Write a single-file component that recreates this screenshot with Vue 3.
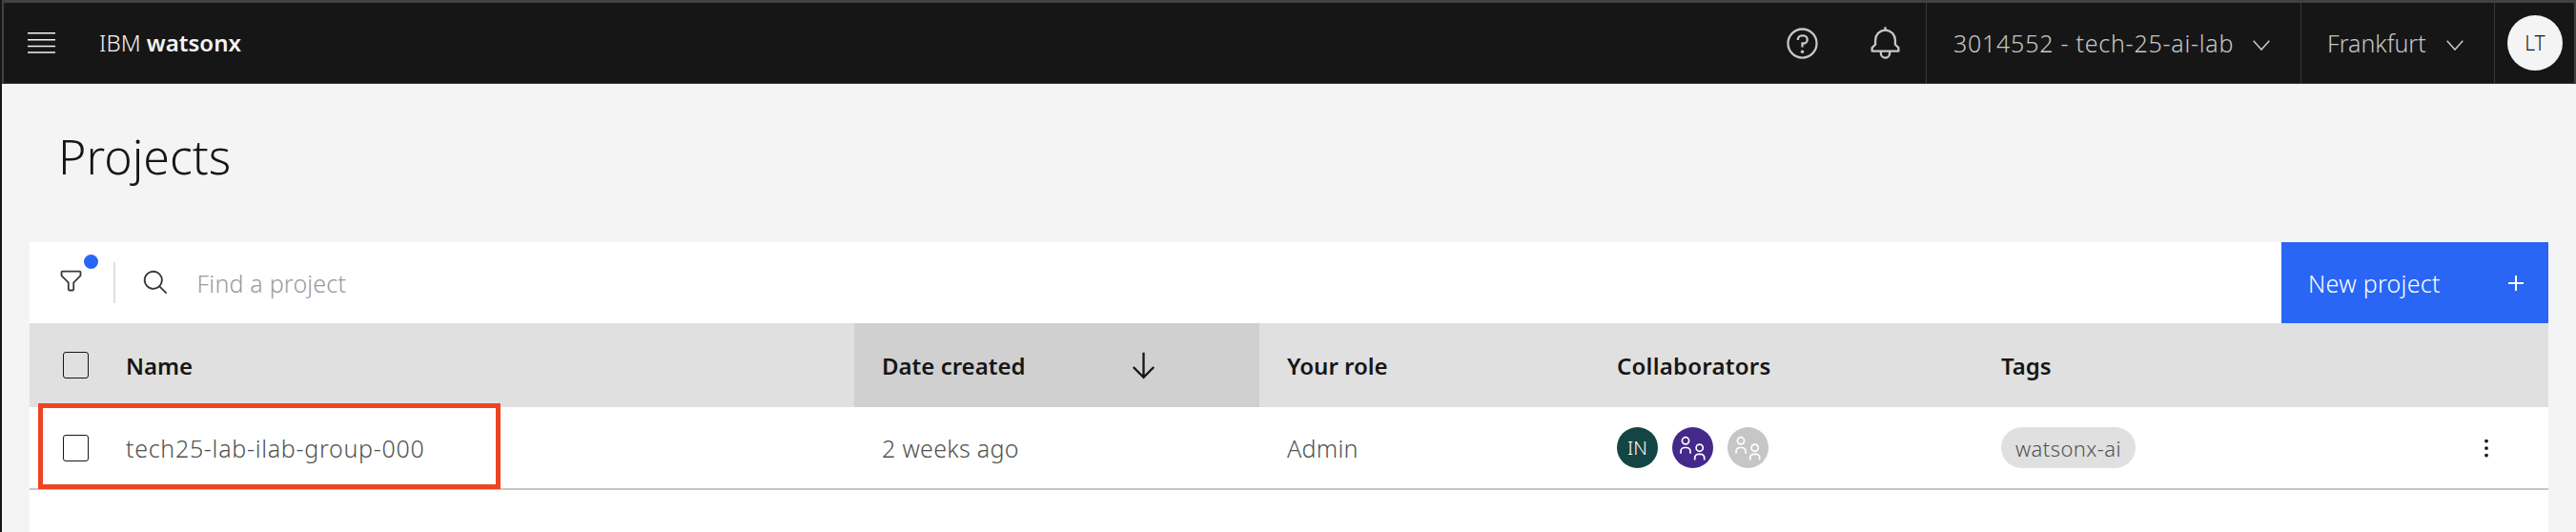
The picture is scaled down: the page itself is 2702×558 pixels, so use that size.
<script setup>
const headers = ['Name', 'Your role', 'Collaborators', 'Tags']
</script>

<template>
  <div class="page">
    <header class="topbar">
      <svg class="menu" viewBox="0 0 29 22" width="29" height="22"><path d="M0 .75h29M0 7.75h29M0 14.5h29M0 21h29" stroke="#f4f4f4" stroke-width="1.7" fill="none"/></svg>
      <div class="brand">IBM <b>watsonx</b></div>
      <div class="spacer"></div>
      <svg class="icon-help" viewBox="0 0 32 32" width="37" height="37" fill="#c6c6c6"><path d="M16,2A14,14,0,1,0,30,16,14,14,0,0,0,16,2Zm0,26A12,12,0,1,1,28,16,12,12,0,0,1,16,28Z"/><circle cx="16" cy="23.5" r="1.5"/><path d="M17,8H15.5A4.49,4.49,0,0,0,11,12.5V13h2v-.5A2.5,2.5,0,0,1,15.5,10H17a2.5,2.5,0,0,1,0,5H15v4.5h2V17a4.5,4.5,0,0,0,0-9Z"/></svg>
      <svg class="icon-bell" viewBox="0 0 32 32" width="37" height="37" fill="#c6c6c6"><path d="M28.7071,19.293,26,16.5859V13a10.0136,10.0136,0,0,0-9-9.9492V1H15V3.0508A10.0136,10.0136,0,0,0,6,13v3.5859L3.2929,19.293A1,1,0,0,0,3,20v3a1,1,0,0,0,1,1h7v.7768a5.152,5.152,0,0,0,4.5,5.1987A5.0057,5.0057,0,0,0,21,25V24h7a1,1,0,0,0,1-1V20A1,1,0,0,0,28.7071,19.293ZM19,25a3,3,0,0,1-6,0V24h6Zm8-3H5V20.4141L7.707,17.707A1,1,0,0,0,8,17V13a8,8,0,0,1,16,0v4a1,1,0,0,0,.293.707L27,20.4141Z"/></svg>
      <div class="switch account">
        <span class="switch-text">3014552 - tech-25-ai-lab</span>
        <svg viewBox="0 0 18 11" width="18" height="11"><path d="M.7.7 9 10 17.3.7" fill="none" stroke="#c6c6c6" stroke-width="1.6"/></svg>
      </div>
      <div class="switch region">
        <span class="switch-text">Frankfurt</span>
        <svg viewBox="0 0 18 11" width="18" height="11"><path d="M.7.7 9 10 17.3.7" fill="none" stroke="#c6c6c6" stroke-width="1.6"/></svg>
      </div>
      <div class="avatar-cell"><div class="avatar">LT</div></div>
    </header>

    <main class="main">
      <h1 class="title">Projects</h1>
      <section class="panel">
        <div class="toolbar">
          <div class="filter">
            <svg viewBox="0 0 32 32" width="29" height="29" fill="#393939"><path d="M18,28H14a2,2,0,0,1-2-2V18.41L4.59,11A2,2,0,0,1,4,9.59V6A2,2,0,0,1,6,4H26a2,2,0,0,1,2,2V9.59A2,2,0,0,1,27.41,11L20,18.41V26A2,2,0,0,1,18,28ZM6,6V9.59l8,8V26h4V17.59l8-8V6Z"/></svg>
            <span class="dot"></span>
          </div>
          <div class="divider"></div>
          <svg class="search" viewBox="0 0 32 32" width="29" height="29" fill="#393939"><path d="M29,27.5859l-7.5521-7.5521a11.0177,11.0177,0,1,0-1.4141,1.4141L27.5859,29ZM4,13a9,9,0,1,1,9,9A9.01,9.01,0,0,1,4,13Z"/></svg>
          <div class="placeholder">Find a project</div>
          <div class="spacer"></div>
          <div class="new-btn">
            <span>New project</span>
            <svg viewBox="0 0 32 32" width="32" height="32" fill="#fff"><path d="M17 15V8h-2v7H8v2h7v7h2v-7h7v-2h-7z"/></svg>
          </div>
        </div>

        <div class="grid head">
          <div class="cell check"><span class="box"></span></div>
          <div class="cell">{{ headers[0] }}</div>
          <div class="cell sorted">
            <span>Date created</span>
            <svg viewBox="0 0 32 32" width="37" height="37" fill="#161616"><path d="M24.59 16.59 17 24.17 17 4 15 4 15 24.17 7.41 16.59 6 18 16 28 26 18 24.59 16.59z"/></svg>
          </div>
          <div class="cell">{{ headers[1] }}</div>
          <div class="cell collab">{{ headers[2] }}</div>
          <div class="cell">{{ headers[3] }}</div>
        </div>

        <div class="grid row">
          <div class="cell check"><span class="box"></span></div>
          <div class="cell name">tech25-lab-ilab-group-000</div>
          <div class="cell">2 weeks ago</div>
          <div class="cell">Admin</div>
          <div class="cell people">
            <span class="person teal">IN</span>
            <span class="person purple"><svg viewBox="0 0 43 43" width="43" height="43"><g fill="none" stroke="#fff" stroke-width="1.7"><circle cx="14" cy="14.3" r="3.6"/><path d="M9 27.7v-2.2a4 4 0 0 1 4-4h2a4 4 0 0 1 4 4v2.2"/><circle cx="28.7" cy="21.7" r="3.6"/><path d="M23.7 34.5v-2.2a4 4 0 0 1 4-4h2a4 4 0 0 1 4 4v2.2"/></g></svg></span>
            <span class="person grey"><svg viewBox="0 0 43 43" width="43" height="43"><g fill="none" stroke="#fff" stroke-width="1.7"><circle cx="14" cy="14.3" r="3.6"/><path d="M9 27.7v-2.2a4 4 0 0 1 4-4h2a4 4 0 0 1 4 4v2.2"/><circle cx="28.7" cy="21.7" r="3.6"/><path d="M23.7 34.5v-2.2a4 4 0 0 1 4-4h2a4 4 0 0 1 4 4v2.2"/></g></svg></span>
          </div>
          <div class="cell tags">
            <span class="tag">watsonx-ai</span>
            <svg class="kebab" viewBox="0 0 32 32" width="30" height="30" fill="#161616"><circle cx="16" cy="8" r="2"/><circle cx="16" cy="16" r="2"/><circle cx="16" cy="24" r="2"/></svg>
          </div>
          <div class="highlight"></div>
        </div>
      </section>
    </main>
  </div>
</template>

<style>
html, body { margin: 0; background: #f4f4f4; overflow: hidden; }
</style>

<style scoped>
.page {
  width: 2702px;
  height: 558px;
  box-sizing: border-box;
  border-left: 2px solid #161616;
  font-family: "Noto Sans", "Liberation Sans", sans-serif;
  display: flex;
  flex-direction: column;
  overflow: hidden;
}
.topbar {
  height: 88px;
  flex: none;
  box-sizing: border-box;
  border-top: 3px solid #414141;
  border-bottom: 1px solid #393939;
  border-left: 2px solid #414141;
  border-right: 2px solid #414141;
  padding-left: 25px;
  background: #161616;
  display: flex;
  align-items: center;
  color: #c6c6c6;
}
.menu { flex: none; }
.brand {
  margin-left: 46px;
  font-size: 24px;
  font-weight: 300;
  color: #f4f4f4;
  position: relative;
  top: -1px;
}
.brand b { font-weight: 600; }
.spacer { flex: 1; }
.icon-help { margin-right: 50px; }
.icon-bell { margin-right: 24px; }
.switch {
  height: 100%;
  box-sizing: border-box;
  border-left: 1px solid #393939;
  display: flex;
  align-items: center;
  font-size: 25px;
  font-weight: 300;
}
.switch svg { margin-top: 5px; }
.account { width: 393px; padding-left: 28px; letter-spacing: 0.75px; }
.account svg { margin-left: 20px; }
.region { width: 203px; padding-left: 27px; }
.region svg { margin-left: 21px; }
.avatar-cell {
  height: 100%;
  width: 84px;
  box-sizing: border-box;
  border-left: 1px solid #393939;
  padding-left: 13px;
  display: flex;
  align-items: center;
}
.avatar {
  width: 58px;
  height: 58px;
  border-radius: 50%;
  background: #f4f4f4;
  color: #161616;
  font-size: 21px;
  font-weight: 300;
  display: flex;
  align-items: center;
  justify-content: center;
}
.main {
  flex: 1;
  display: flex;
  flex-direction: column;
  padding: 0 29px;
  min-height: 0;
}
.title {
  margin: 0;
  height: 166px;
  box-sizing: border-box;
  padding: 46px 0 0 30px;
  font-size: 50px;
  line-height: 60px;
  font-weight: 300;
  color: #161616;
}
.panel {
  flex: 1;
  background: #fff;
}
.toolbar {
  height: 85px;
  display: flex;
  align-items: center;
  position: relative;
}
.filter {
  position: relative;
  margin-left: 28.5px;
  width: 29px;
  height: 29px;
  top: -2.5px;
}
.filter svg { display: block; }
.dot {
  position: absolute;
  left: 28.5px;
  top: -12.5px;
  width: 15px;
  height: 15px;
  border-radius: 50%;
  background: #2966f6;
}
.divider {
  width: 2px;
  height: 43px;
  margin-left: 30px;
  background: #e0e0e0;
}
.search { margin-left: 28px; }
.placeholder {
  margin-left: 29px;
  font-size: 25px;
  letter-spacing: 0.2px;
  font-weight: 300;
  color: #9a9a9a;
}
.new-btn {
  width: 280px;
  height: 100%;
  box-sizing: border-box;
  padding: 0 26px 0 28px;
  background: #2966f6;
  color: #fff;
  font-size: 25px;
  letter-spacing: 0.3px;
  font-weight: 300;
  display: flex;
  align-items: center;
  justify-content: space-between;
}
.new-btn svg { margin-right: -8px; }
.grid {
  display: grid;
  grid-template-columns: 101px 764px 425px 346px 403px 603px;
  font-size: 24px;
}
.cell {
  display: flex;
  align-items: center;
  min-width: 0;
  padding-left: 0;
}
.head {
  height: 88px;
  background: #e0e0e0;
  color: #161616;
  font-weight: 600;
}
.head .cell:nth-child(n+3), .row .cell:nth-child(n+3) { padding-left: 29px; }
.collab { letter-spacing: 0.25px; }
.sorted {
  background: #d0d0d0;
  justify-content: space-between;
  padding-right: 103px;
}
.check { padding-left: 35px !important; }
.box {
  width: 25px;
  height: 26px;
  border: 1.7px solid #161616;
  border-radius: 3px;
  display: block;
}
.row {
  position: relative;
  height: 87px;
  box-sizing: border-box;
  border-bottom: 2px solid #c6c6c6;
  color: #525252;
  font-size: 25px;
  letter-spacing: 0.3px;
  font-weight: 300;
}
.row .name { letter-spacing: 0.7px; }
.highlight {
  position: absolute;
  left: 9px;
  top: -4px;
  width: 475px;
  height: 80px;
  border: 5px solid #ee4423;
}
.people { gap: 15px; }
.person {
  width: 43px;
  height: 43px;
  border-radius: 50%;
  display: flex;
  align-items: center;
  justify-content: center;
  color: #fff;
  font-size: 20px;
  letter-spacing: 0;
}
.person svg { display: block; }
.teal { background: #144545; }
.purple { background: #44288a; }
.grey { background: #c6c6c6; }
.tags { position: relative; }
.tag {
  height: 43px;
  padding: 0 15px;
  border-radius: 22px;
  background: #e0e0e0;
  font-size: 22px;
  letter-spacing: 0.4px;
  display: flex;
  align-items: center;
}
.kebab { position: absolute; left: 523px; top: 28px; }
</style>
